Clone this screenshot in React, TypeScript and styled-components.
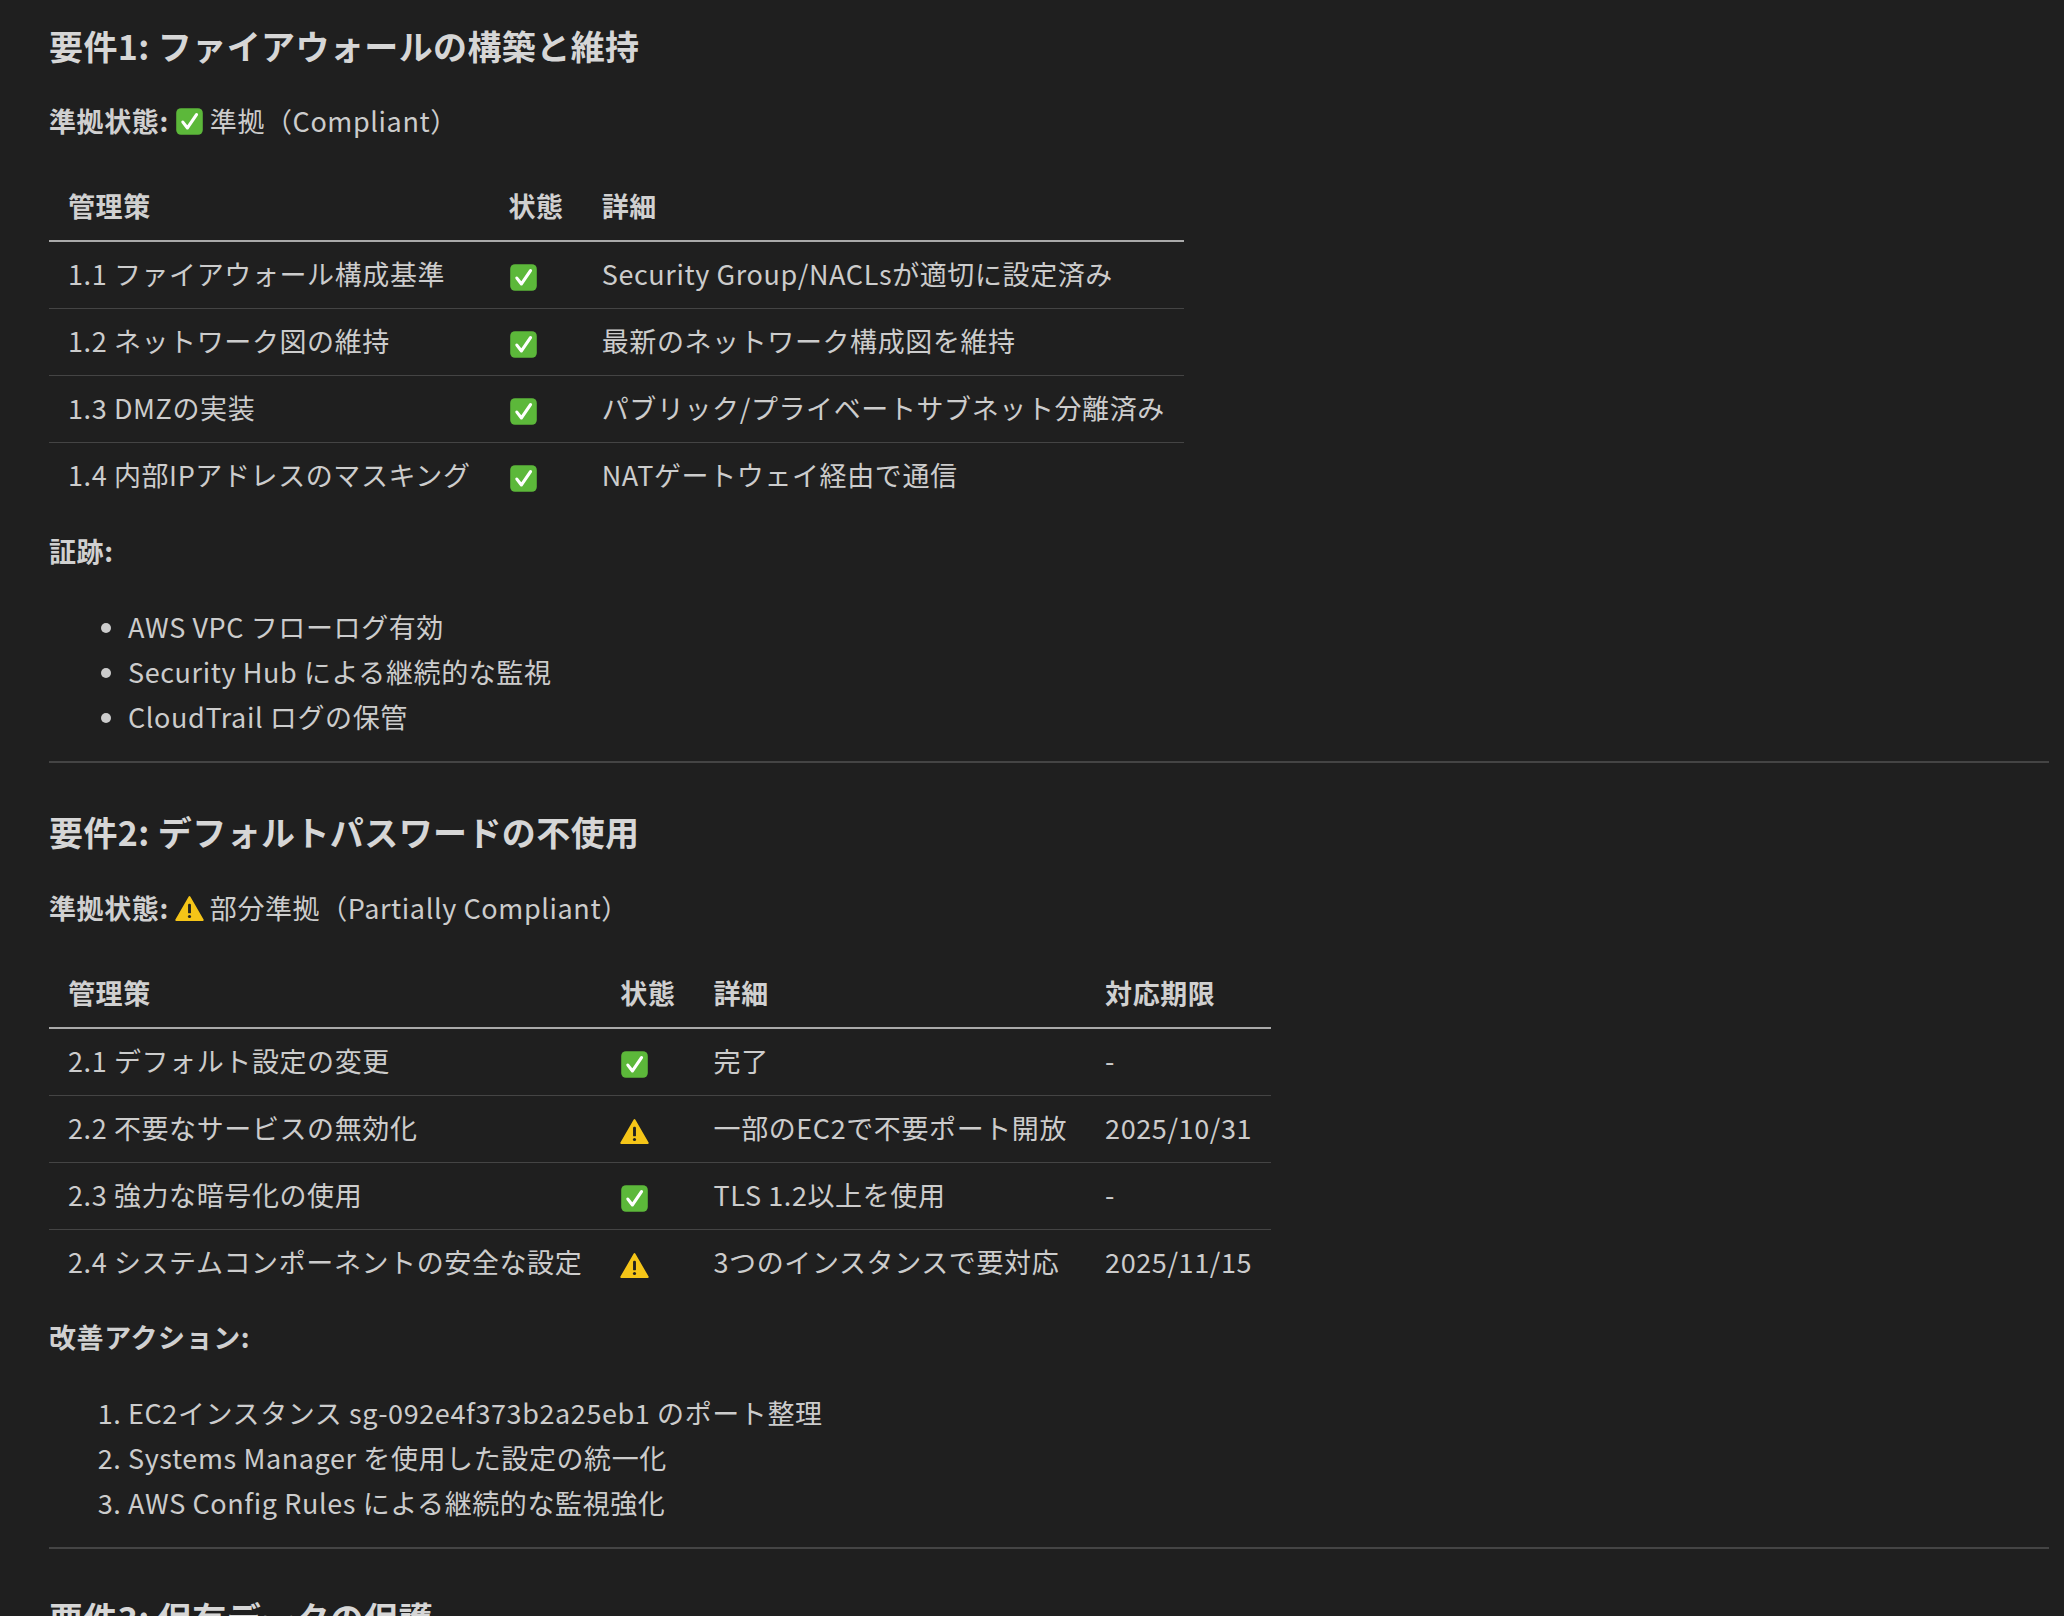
import React from "react";
import styled, { createGlobalStyle } from "styled-components";

const Global = createGlobalStyle`
  html, body { margin: 0; padding: 0; background: #1f1f1f; }
  body { font-family: "Noto Sans CJK JP", "Noto Sans", sans-serif; color: #cccccc; }
`;

const Page = styled.div`
  padding: 0 15px 0 49px;
  width: 2064px;
  box-sizing: border-box;
  height: 1616px;
  overflow: hidden;
`;

const H2 = styled.h2<{ $top: number }>`
  margin: ${(p) => p.$top}px 0 0;
  font-size: 34px;
  line-height: 60px;
  font-weight: 700;
  letter-spacing: 0.4px;
  color: #d6d6d6;
`;

const Para = styled.p<{ $top: number }>`
  margin: ${(p) => p.$top}px 0 0;
  font-size: 27px;
  letter-spacing: 0.6px;
  line-height: 40px;
  display: flex;
  align-items: center;
  gap: 6px;
  b { font-weight: 700; color: #d0d0d0; }
`;

const Table = styled.table<{ $top: number }>`
  margin-top: ${(p) => p.$top}px;
  border-collapse: collapse;
  font-size: 27px;
  letter-spacing: 0.6px;
  th, td { padding: 0 19px 3px; text-align: left; white-space: nowrap; height: 63px; }
  th { font-weight: 700; color: #d0d0d0; border-bottom: 2px solid #aaaaaa; }
  tbody tr + tr td { border-top: 1px solid #444; }
`;

const List = styled.ul<{ $top: number }>`
  margin: ${(p) => p.$top}px 0 0;
  padding-left: 79px;
  font-size: 27px;
  letter-spacing: 0.6px;
  line-height: 45px;
`;
const OList = styled.ol<{ $top: number }>`
  margin: ${(p) => p.$top}px 0 0;
  padding-left: 79px;
  font-size: 27px;
  letter-spacing: 0.6px;
  line-height: 45px;
`;

const Rule = styled.hr<{ $top: number }>`
  margin: ${(p) => p.$top}px 0 0;
  border: none;
  border-top: 2px solid #444;
`;

const IconWrap = styled.span`
  display: inline-flex;
  vertical-align: middle;
`;

const Check = () => (
  <IconWrap>
    <svg width="29" height="29" viewBox="0 0 24 24">
      <rect x="1" y="1" width="22" height="22" rx="4" fill="#5cb83a" />
      <path d="M6.5 12.5l3.8 4.8 7.5-11" stroke="#fff" strokeWidth="2.6" fill="none" strokeLinecap="round" strokeLinejoin="round" />
    </svg>
  </IconWrap>
);
const Warn = () => (
  <IconWrap>
    <svg width="29" height="27" viewBox="0 0 24 22">
      <path d="M12 1.5L23 20.5H1Z" fill="#f5c518" stroke="#f5c518" strokeWidth="1.5" strokeLinejoin="round" />
      <rect x="10.8" y="7" width="2.4" height="8" rx="1" fill="#222" />
      <circle cx="12" cy="17.6" r="1.3" fill="#222" />
    </svg>
  </IconWrap>
);

const t1 = [
  ["1.1 ファイアウォール構成基準", "Security Group/NACLsが適切に設定済み"],
  ["1.2 ネットワーク図の維持", "最新のネットワーク構成図を維持"],
  ["1.3 DMZの実装", "パブリック/プライベートサブネット分離済み"],
  ["1.4 内部IPアドレスのマスキング", "NATゲートウェイ経由で通信"],
];
const t2: [string, boolean, string, string][] = [
  ["2.1 デフォルト設定の変更", true, "完了", "-"],
  ["2.2 不要なサービスの無効化", false, "一部のEC2で不要ポート開放", "2025/10/31"],
  ["2.3 強力な暗号化の使用", true, "TLS 1.2以上を使用", "-"],
  ["2.4 システムコンポーネントの安全な設定", false, "3つのインスタンスで要対応", "2025/11/15"],
];

export default function App() {
  return (
    <Page>
      <Global />
      <H2 $top={16}>要件1: ファイアウォールの構築と維持</H2>
      <Para $top={25}><b>準拠状態:</b><Check />準拠（Compliant）</Para>
      <Table $top={33}>
        <thead><tr><th>管理策</th><th>状態</th><th>詳細</th></tr></thead>
        <tbody>
          {t1.map(([a, b]) => (
            <tr key={a}><td>{a}</td><td><Check /></td><td>{b}</td></tr>
          ))}
        </tbody>
      </Table>
      <Para $top={22}><b>証跡:</b></Para>
      <List $top={33}>
        <li>AWS VPC フローログ有効</li>
        <li>Security Hub による継続的な監視</li>
        <li>CloudTrail ログの保管</li>
      </List>
      <Rule $top={22} />
      <H2 $top={39}>要件2: デフォルトパスワードの不使用</H2>
      <Para $top={26}><b>準拠状態:</b><Warn />部分準拠（Partially Compliant）</Para>
      <Table $top={33}>
        <thead><tr><th>管理策</th><th>状態</th><th>詳細</th><th>対応期限</th></tr></thead>
        <tbody>
          {t2.map(([a, ok, c, d]) => (
            <tr key={a}><td>{a}</td><td>{ok ? <Check /> : <Warn />}</td><td>{c}</td><td>{d}</td></tr>
          ))}
        </tbody>
      </Table>
      <Para $top={21}><b>改善アクション:</b></Para>
      <OList $top={33}>
        <li>EC2インスタンス sg-092e4f373b2a25eb1 のポート整理</li>
        <li>Systems Manager を使用した設定の統一化</li>
        <li>AWS Config Rules による継続的な監視強化</li>
      </OList>
      <Rule $top={22} />
      <H2 $top={39}>要件3: 保有データの保護</H2>
    </Page>
  );
}
